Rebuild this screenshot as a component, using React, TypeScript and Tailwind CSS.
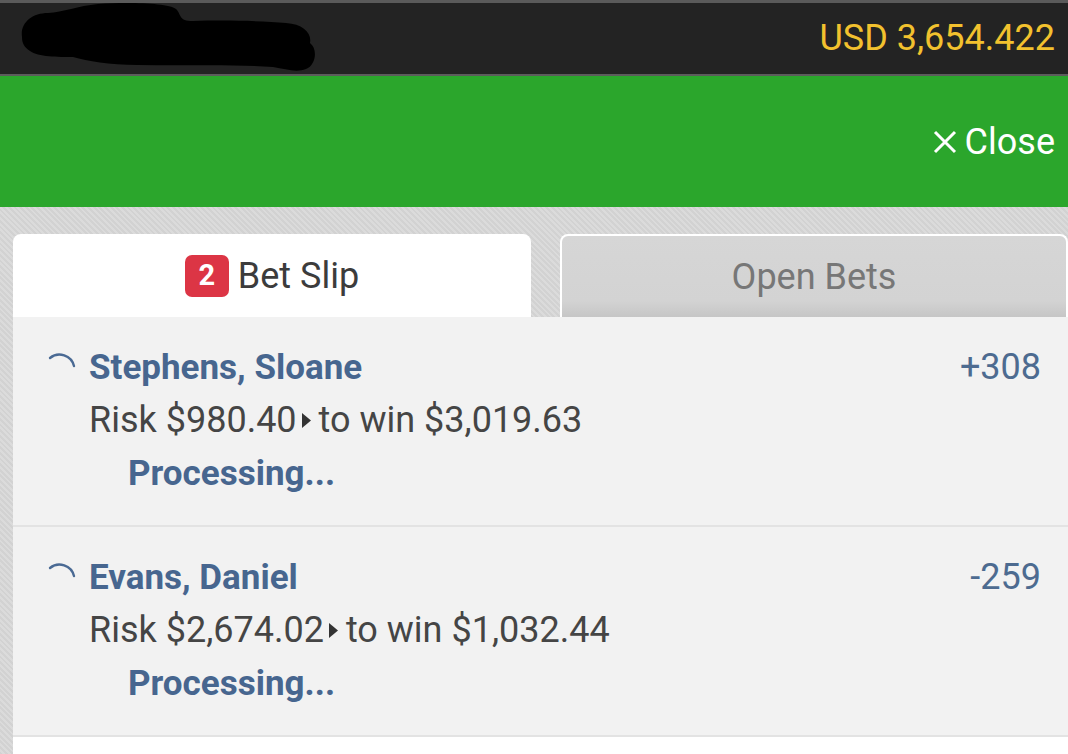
import React from "react";

function Spinner() {
  return (
    <svg width="30" height="30" viewBox="0 0 30 30" className="shrink-0">
      <path
        d="M2 8 A15 15 0 0 1 26 16"
        fill="none"
        stroke="#4a6a94"
        strokeWidth="2.4"
        strokeLinecap="round"
      />
    </svg>
  );
}

function Blot() {
  return (
    <svg width="300" height="72" viewBox="0 0 300 72" className="absolute left-[18px] top-0">
      <path
        d="M4 34 C2 20 14 10 30 10 C45 9 60 3 80 1 C110 -1 150 0 158 6 C164 12 160 18 175 18 C210 17 245 18 268 20 C285 21 294 30 292 40 C300 46 298 62 288 66 C278 70 268 66 255 64 C215 61 170 63 120 62 C90 62 70 58 55 54 C40 54 20 54 12 48 C6 44 4 40 4 34 Z"
        fill="#000"
      />
    </svg>
  );
}

function BetRow({ name, odds, risk, win }: { name: string; odds: string; risk: string; win: string }) {
  return (
    <div className="h-[210px] border-b-2 border-[#e3e3e3] pl-[35px] pr-[27px] pt-[24px]">
      <div className="flex items-center">
        <div className="w-[41px] -mt-[6px]">
          <Spinner />
        </div>
        <div className="flex-1 text-[35px] leading-[53px] font-bold text-[#47668f]">{name}</div>
        <div className="text-[36px] leading-[53px] text-[#4d6b90]">{odds}</div>
      </div>
      <div className="pl-[41px] text-[36px] leading-[53px] text-[#454545] flex items-center">
        <span>Risk {risk}</span>
        <svg width="11" height="17" viewBox="0 0 11 17" className="shrink-0 ml-[4px] mr-[7px]">
          <path d="M1 1 L10 8.5 L1 16 Z" fill="#333" />
        </svg>
        <span>to win {win}</span>
      </div>
      <div className="pl-[80px] text-[35px] leading-[53px] font-bold text-[#47668f]">Processing...</div>
    </div>
  );
}

export default function App() {
  return (
    <div className="w-[1068px] h-[754px] overflow-hidden font-['Roboto',sans-serif] bg-[#d6d6d6] flex flex-col">
      {/* top account bar */}
      <div className="relative h-[76px] bg-[#232323] border-t-[3px] border-t-[#5a5a5a] border-b-2 border-b-[#5c5c5c] flex items-center justify-end pr-[13px]">
        <Blot />
        <span className="text-[36px] text-[#f2c12e] -mt-[2px]">USD 3,654.422</span>
      </div>

      <div className="h-[131px] bg-[#2ba62c] flex items-center justify-end pr-[13px]">
        <span className="text-white text-[36px] flex items-center gap-[8px]">
          <svg width="24" height="24" viewBox="0 0 24 24">
            <path d="M2 2 L22 22 M22 2 L2 22" stroke="#fff" strokeWidth="3" />
          </svg>
          Close
        </span>
      </div>

      <div className="flex-1 pl-[13px] pt-[27px] bg-[repeating-linear-gradient(45deg,#d2d2d2_0px,#d2d2d2_2px,#dbdbdb_2px,#dbdbdb_4px)] flex flex-col">
        <div className="flex items-start gap-[29px]">
          <div className="w-[518px] h-[83px] bg-white rounded-t-[8px] flex items-center justify-center gap-[9px]">
            <span className="w-[44px] h-[42px] rounded-[7px] bg-[#dc3545] text-white font-bold text-[29px] flex items-center justify-center">
              2
            </span>
            <span className="text-[36px] text-[#3c3c3c]">Bet Slip</span>
          </div>
          <div className="flex-1 h-[83px] rounded-t-[8px] border-2 border-b-0 border-white bg-[linear-gradient(#d6d6d6,#d3d3d3_80%,#c6c6c6)] flex items-center justify-center">
            <span className="text-[36px] text-[#777]">Open Bets</span>
          </div>
        </div>

        <div className="flex-1 bg-[#f2f2f2] flex flex-col">
          <BetRow name="Stephens, Sloane" odds="+308" risk="$980.40" win="$3,019.63" />
          <BetRow name="Evans, Daniel" odds="-259" risk="$2,674.02" win="$1,032.44" />
          <div className="flex-1 bg-white" />
        </div>
      </div>
    </div>
  );
}
